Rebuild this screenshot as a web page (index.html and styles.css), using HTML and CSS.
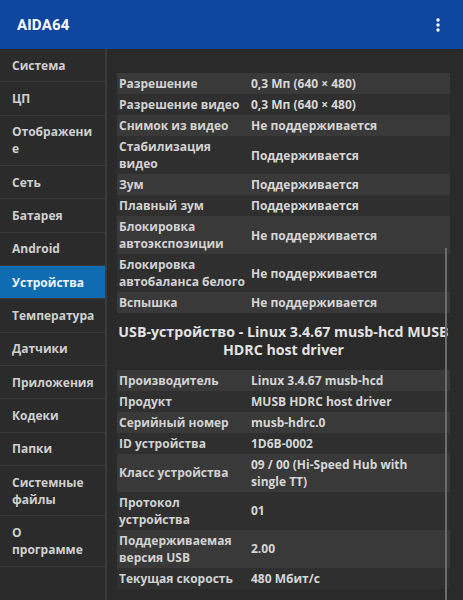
FILE: index.html
```html
<!DOCTYPE html>
<html lang="ru">
<head>
<meta charset="utf-8">
<title>AIDA64</title>
<link rel="stylesheet" href="styles.css">
</head>
<body>
<header class="appbar">
  <span class="title">AIDA64</span>
  <svg class="menu" width="6" height="16" viewBox="0 0 6 16"><circle cx="3" cy="3" r="1.7"/><circle cx="3" cy="8" r="1.7"/><circle cx="3" cy="13" r="1.7"/></svg>
</header>
<div class="main">
  <nav class="sidebar">
    <div class="item">Система</div>
    <div class="item">ЦП</div>
    <div class="item">Отображени<wbr>е</div>
    <div class="item">Сеть</div>
    <div class="item">Батарея</div>
    <div class="item">Android</div>
    <div class="item active">Устройства</div>
    <div class="item">Температура</div>
    <div class="item">Датчики</div>
    <div class="item">Приложения</div>
    <div class="item">Кодеки</div>
    <div class="item">Папки</div>
    <div class="item">Системные файлы</div>
    <div class="item">О программе</div>
  </nav>
  <section class="content">
    <div class="table">
      <div class="row"><div class="k">Разрешение</div><div class="v">0,3 Мп (640 × 480)</div></div>
      <div class="row"><div class="k">Разрешение видео</div><div class="v">0,3 Мп (640 × 480)</div></div>
      <div class="row"><div class="k">Снимок из видео</div><div class="v">Не поддерживается</div></div>
      <div class="row"><div class="k">Стабилизация видео</div><div class="v">Поддерживается</div></div>
      <div class="row"><div class="k">Зум</div><div class="v">Поддерживается</div></div>
      <div class="row"><div class="k">Плавный зум</div><div class="v">Поддерживается</div></div>
      <div class="row"><div class="k">Блокировка автоэкспозиции</div><div class="v">Не поддерживается</div></div>
      <div class="row"><div class="k">Блокировка автобаланса белого</div><div class="v">Не поддерживается</div></div>
      <div class="row"><div class="k">Вспышка</div><div class="v">Не поддерживается</div></div>
    </div>
    <h2 class="heading">USB-устройство - Linux 3.4.67 musb-hcd MUSB HDRC host driver</h2>
    <div class="table">
      <div class="row"><div class="k">Производитель</div><div class="v">Linux 3.4.67 musb-hcd</div></div>
      <div class="row"><div class="k">Продукт</div><div class="v">MUSB HDRC host driver</div></div>
      <div class="row"><div class="k">Серийный номер</div><div class="v">musb-hdrc.0</div></div>
      <div class="row"><div class="k">ID устройства</div><div class="v">1D6B-0002</div></div>
      <div class="row"><div class="k">Класс устройства</div><div class="v">09 / 00 (Hi-Speed Hub with single TT)</div></div>
      <div class="row"><div class="k">Протокол устройства</div><div class="v">01</div></div>
      <div class="row"><div class="k">Поддерживаемая версия USB</div><div class="v">2.00</div></div>
      <div class="row"><div class="k">Текущая скорость</div><div class="v">480 Мбит/с</div></div>
    </div>
    <div class="scrollthumb"></div>
  </section>
</div>
</body>
</html>
```
FILE: styles.css
```css
* { box-sizing: border-box; }
html, body { margin: 0; padding: 0; }
body {
  width: 463px;
  height: 600px;
  overflow: hidden;
  background: #2a2a2a;
  font-family: "Open Sans", "Noto Sans", "Liberation Sans", sans-serif;
  font-weight: 700;
  color: #d4d4d4;
}
.appbar {
  height: 49px;
  background: #0e46a0;
  display: flex;
  align-items: center;
  justify-content: space-between;
  padding: 0 22px 0 17px;
}
.title {
  color: #ffffff;
  font-family: Roboto, "Open Sans", sans-serif;
  font-size: 15px;
  font-weight: 700;
  letter-spacing: 0.2px;
}
.menu { fill: #ffffff; }
.main {
  display: flex;
  height: 551px;
}
.sidebar {
  width: 107px;
  flex: none;
  background: #2b2b2b;
  border-right: 2px solid #3a3a3a;
}
.item {
  padding: 7.68px 12px 7.68px 12px;
  line-height: 17px;
  font-size: 12px;
  color: #cfcfcf;
  border-bottom: 1px solid #3a3a3a;
}
.item.active {
  background: #0f6cb0;
  color: #eef4fa;
}
.content {
  flex: 1;
  position: relative;
  padding: 24px 10px 0 10px;
  background: #2a2a2a;
}
.table {
  width: 333px;
}
.row {
  display: grid;
  grid-template-columns: 134px 1fr;
  align-items: center;
  padding: 2px 0;
  font-size: 12px;
  line-height: 17px;
}
.row:nth-child(odd) { background: #393939; }
.row:nth-child(even) { background: #2f2f2f; }
.k { padding: 0 6px 0 2px; color: #d2d2d2; }
.v { padding: 0 14px 0 0; color: #d6d6d6; }
.heading {
  margin: 10px 0 10.5px 0;
  width: 333px;
  text-align: center;
  font-size: 14.2px;
  line-height: 18px;
  font-weight: 700;
  color: #e2e2e2;
}
.scrollthumb {
  position: absolute;
  left: 338px;
  top: 199px;
  bottom: 0;
  width: 2px;
  background: #6c6c6c;
}
```
